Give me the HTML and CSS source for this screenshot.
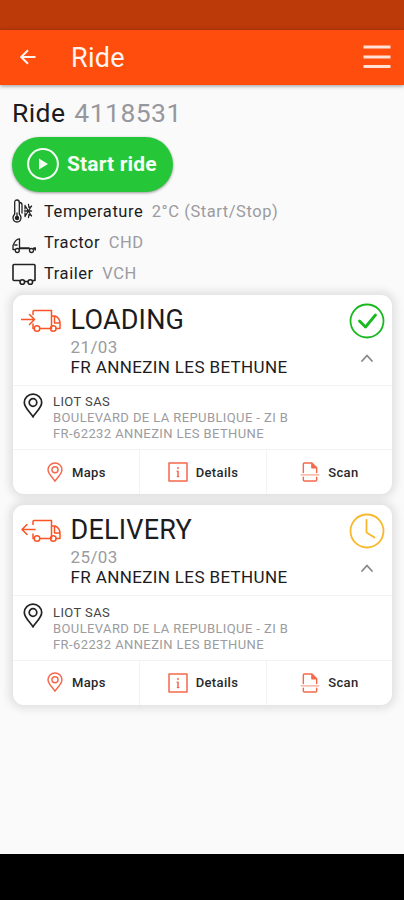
FILE: index.html
```html
<!DOCTYPE html>
<html lang="en">
<head>
<meta charset="utf-8">
<meta name="viewport" content="width=device-width">
<title>Ride</title>
<link rel="stylesheet" href="styles.css">
</head>
<body>
<svg width="0" height="0" class="defs">
  <symbol id="truck" viewBox="0 0 40 28"><path d="M12 6.500V3.500Q12 2.500 13 2.500H30.500V20.500M12 16V20.500H13.500M19 20.500H29.500M30.500 8H34Q39 10 39 15.500V20.500H35M33.500 9V15H39"/><circle cx="16" cy="20.500" r="2.800"/><circle cx="32.300" cy="20.500" r="2.800"/></symbol>
  <symbol id="pin" viewBox="0 0 20 26"><path d="M10 24C8.500 20.500 1.300 15 1.300 9.500A8.700 8.300 0 0 1 18.700 9.500C18.700 15 11.500 20.500 10 24Z"/><circle cx="10" cy="9.500" r="3.800"/></symbol>
  <symbol id="info" viewBox="0 0 20 20"><path d="M1 1H19V19H1Z"/><path d="M10 5.500V6.500M9.200 9.300H10V14.500M9.500 14.500H10.700"/></symbol>
  <symbol id="scan" viewBox="0 0 20 21"><path d="M3 11V2Q3 1 4 1H12L17 6V11M3 16V19Q3 20 4 20H16Q17 20 17 19V16"/><path d="M12 1.500V6H16.500Z" fill="currentColor"/><path class="faint" d="M.5 13.500H19.500"/></symbol>
</svg>
<div class="status"></div>
<header class="bar">
  <svg class="back" viewBox="0 0 16 16"><path d="M15.500 8H1.500M8 1.200L1.200 8L8 14.800"/></svg>
  <h1>Ride</h1>
  <svg class="menu" viewBox="0 0 28 26"><path d="M.5 3H27.500M.5 13H27.500M.5 22.500H27.500"/></svg>
</header>
<main>
  <h2>Ride <span>4118531</span></h2>
  <button class="start"><svg viewBox="0 0 32 32"><circle cx="16" cy="16" r="14.900"/><path d="M12 10.500V21.500L21 16Z"/></svg><span>Start ride</span></button>
  <ul class="facts">
    <li><svg class="thin" viewBox="0 0 24 24"><path d="M2.700 15V3.500Q2.700 1 5 1T7.300 3.500V15Q9 17 9 19Q8.500 23 5 23T1 19Q1 17 2.700 15Z"/><path d="M5 14V18M7.500 3.500Q10 3.500 10 6V14"/><circle cx="5" cy="19" r="1.600" fill="currentColor"/><path d="M12.500 12H19.500M13 6.500L19.500 17M13 17.500L19.500 7M13 6.500V10M13 14V17.500M16.500 5.500L17 8.500L19.500 7.500M16.500 18.500L17 15.500L19.500 16.500"/></svg><b>Temperature</b><span>2°C (Start/Stop)</span></li>
    <li><svg class="tractor" viewBox="0 0 24 24"><path d="M7.500 8Q4 7.500 1 14.500V18.500H2.500M7.500 8V18M2.800 14H5"/><path class="heavy" d="M8 17.200H17M22 17.200H23.200V18.500"/><circle cx="5.300" cy="19.500" r="2"/><circle cx="19.500" cy="19.500" r="2"/></svg><b>Tractor</b><span>CHD</span></li>
    <li><svg viewBox="0 0 24 24"><path d="M7.500 18.500H2Q1 18.500 1 17.500V3.500Q1 2.500 2 2.500H22Q23 2.500 23 3.500V18.500H21"/><circle cx="10.300" cy="20" r="2.300"/><circle cx="18.300" cy="20" r="2.300"/><path d="M12.600 19.500H16"/></svg><b>Trailer</b><span>VCH</span></li>
  </ul>
  <article class="card">
    <section class="head">
      <div class="truck"><svg viewBox="0 0 40 28"><use href="#truck"/><path d="M0 11.500H13M8.500 6.500L13.500 11.500L8.500 16.500"/></svg></div>
      <div class="info"><h3 class="loading">LOADING</h3><time>21/03</time><p>FR ANNEZIN LES BETHUNE</p></div>
      <div class="state done"><svg class="ring" viewBox="0 0 36 36"><circle cx="18" cy="18" r="16.500"/><path class="check" d="M10.500 18L16.500 24L26.500 12"/></svg><svg class="chevron" viewBox="0 0 12 8"><path d="M1 7L6 1.500L11 7"/></svg></div>
    </section>
    <section class="place"><svg viewBox="0 0 20 26"><use href="#pin"/></svg><address><strong>LIOT SAS</strong><span>BOULEVARD DE LA REPUBLIQUE - ZI B</span><span>FR-62232 ANNEZIN LES BETHUNE</span></address></section>
    <footer><button><svg class="i-pin" viewBox="0 0 20 26"><use href="#pin"/></svg>Maps</button><button><svg viewBox="0 0 20 20"><use href="#info"/></svg>Details</button><button><svg viewBox="0 0 20 21"><use href="#scan"/></svg>Scan</button></footer>
  </article>
  <article class="card">
    <section class="head">
      <div class="truck"><svg viewBox="0 0 40 28"><use href="#truck"/><path d="M14 11.500H1M6 6.500L1 11.500L6 16.500"/></svg></div>
      <div class="info"><h3 class="delivery">DELIVERY</h3><time>25/03</time><p>FR ANNEZIN LES BETHUNE</p></div>
      <div class="state wait"><svg class="ring" viewBox="0 0 36 36"><circle cx="18" cy="18" r="16.500"/><path d="M17.500 7V19.500L25.500 24.500"/></svg><svg class="chevron" viewBox="0 0 12 8"><path d="M1 7L6 1.500L11 7"/></svg></div>
    </section>
    <section class="place"><svg viewBox="0 0 20 26"><use href="#pin"/></svg><address><strong>LIOT SAS</strong><span>BOULEVARD DE LA REPUBLIQUE - ZI B</span><span>FR-62232 ANNEZIN LES BETHUNE</span></address></section>
    <footer><button><svg class="i-pin" viewBox="0 0 20 26"><use href="#pin"/></svg>Maps</button><button><svg viewBox="0 0 20 20"><use href="#info"/></svg>Details</button><button><svg viewBox="0 0 20 21"><use href="#scan"/></svg>Scan</button></footer>
  </article>
</main>
<div class="nav"></div>
</body>
</html>
```
FILE: styles.css
```css
* { box-sizing: border-box; margin: 0; padding: 0; }
body { width: 404px; height: 900px; display: flex; flex-direction: column; overflow: hidden; background: #fafafa; color: #1c1c1e; font-family: Roboto, sans-serif; }
svg { fill: none; stroke: currentColor; stroke-linecap: round; stroke-linejoin: round; flex: none; display: block; }
.defs { position: absolute; }
button { border: 0; background: none; font-family: inherit; }
.status { height: 29.5px; background: #bc390a; flex: none; }
.bar { height: 55px; flex: none; display: flex; align-items: center; padding: 0 13px 0 20px; background: #ff4d0d; color: #fff4ef; box-shadow: 0 1px 4px rgba(0,0,0,.4); z-index: 1; }
.back { width: 16px; height: 16px; stroke-width: 2; stroke-linecap: butt; stroke-linejoin: miter; }
.bar h1 { font-size: 27px; font-weight: 400; margin-left: 35px; padding-top: 2px; flex: 1; line-height: 32px; letter-spacing: .3px; }
.menu { width: 28px; height: 26px; stroke-width: 3; stroke-linecap: butt; color: #ffe1d7; }
main { flex: 1; padding: 11px 12px 0 13px; }
h2 { font-size: 26.5px; font-weight: 400; line-height: 34px; margin-left: -1px; letter-spacing: .4px; }
h2 span { color: #97979e; margin-left: 2px; letter-spacing: .45px; }
.start { display: flex; align-items: center; gap: 8px; width: 161px; height: 55px; margin: 7px 0 0 -1px; padding-left: 15px; border-radius: 28px; background: #25c637; color: #f4fff4; box-shadow: 0 1px 3px rgba(0,0,0,.4); font-size: 21px; font-weight: 700; letter-spacing: .15px; }
.start svg { width: 32px; height: 32px; stroke-width: 2; }
.start path { fill: currentColor; stroke: none; }
.facts { list-style: none; margin: 4px 0 5.3px -1px; }
.facts li { display: flex; align-items: center; height: 31.4px; font-size: 16.5px; letter-spacing: .55px; }
.facts svg { width: 24px; height: 24px; margin-right: 8px; stroke-width: 1.6; color: #222; }
.facts .thin { stroke-width: 1.3; }
.facts .tractor { stroke-width: 1.3; }
.heavy { stroke-width: 2; }
.facts b { font-weight: 400; }
.facts span { color: #9b9ba0; margin-left: 8.5px; }
.card { width: 379px; height: 199.5px; margin-bottom: 11px; border-radius: 11px; background: #fff; box-shadow: 0 0 9px 4px rgba(0,0,0,.1); display: flex; flex-direction: column; }
.head { height: 91px; flex: none; display: flex; padding: 8px 7px 0 8px; border-bottom: 1.5px solid #f3f3f3; }
.truck { width: 49.5px; padding-top: 5px; color: #fa5426; }
.truck svg { width: 40px; height: 28px; stroke-width: 1.5; }
.info { flex: 1; }
.info h3 { font-size: 27px; font-weight: 400; line-height: 34px; letter-spacing: .2px; }
.info time { display: block; font-size: 17px; line-height: 20px; letter-spacing: .4px; color: #9b9ba0; }
.info p { font-size: 17px; line-height: 21px; letter-spacing: .37px; }
.state { width: 36px; display: flex; flex-direction: column; align-items: center; gap: 15px; }
.ring { width: 36px; height: 36px; stroke-width: 1.8; }
.done { color: #18b91e; }
.wait { color: #f8b82c; }
.check { stroke-width: 2.8; }
.chevron { width: 12px; height: 8px; color: #88888c; stroke-width: 1.8; }
.place { height: 64.5px; flex: none; display: flex; padding: 7px 10px; border-bottom: 1.5px solid #f3f3f3; }
.place svg { width: 20px; height: 26px; color: #222; stroke-width: 1.7; margin-right: 10px; }
address { padding-top: 1.5px; font-style: normal; font-size: 13px; line-height: 16px; letter-spacing: .4px; color: #9b9ba0; }
address strong, address span { display: block; white-space: nowrap; }
address strong { color: #444; font-weight: 400; }
footer { flex: 1; display: grid; grid-template-columns: repeat(3, 1fr); }
footer button { display: flex; align-items: center; justify-content: center; gap: 8px; font-size: 13px; font-weight: 500; letter-spacing: .35px; color: #28282a; }
footer button:first-child { gap: 9.5px; }
footer button + button { border-left: 1.5px solid #f3f3f3; }
footer svg { width: 20px; height: 20px; color: #f4694b; stroke-width: 1.5; }
footer .i-pin { width: 16px; height: 21px; stroke-width: 1.8; }
.faint { opacity: .6; }
.nav { height: 46.5px; flex: none; background: #000; }
```
